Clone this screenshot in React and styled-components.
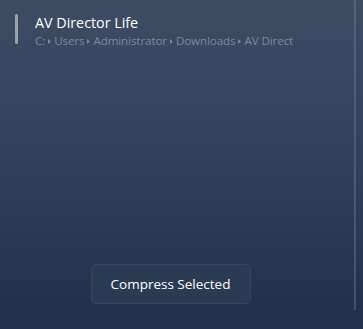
import React from "react";
import styled, { createGlobalStyle } from "styled-components";

const GlobalStyle = createGlobalStyle`
  html, body {
    margin: 0;
    padding: 0;
    background: #1f3049;
  }
  body {
    font-family: "Open Sans", "Noto Sans", sans-serif;
  }
`;

const Window = styled.div`
  display: flex;
  width: 363px;
  height: 329px;
  background: linear-gradient(180deg, #3e4d64 0%, #2f405a 50%, #1f3049 100%);
  overflow: hidden;
`;

const Main = styled.div`
  width: 341px;
  display: flex;
  flex-direction: column;
  align-items: stretch;
`;

const Gutter = styled.div`
  flex: 1;
  display: flex;
  padding: 0 0 19px 13px;
`;

const Track = styled.div`
  width: 2px;
  background: rgba(120, 140, 170, 0.35);
`;

const Item = styled.div`
  display: flex;
  align-items: flex-start;
  gap: 17px;
  padding: 14px 0 0 15px;
`;

const Marker = styled.div`
  width: 3px;
  height: 30px;
  border-radius: 2px;
  background: #9b9fa6;
`;

const Texts = styled.div`
  display: flex;
  flex-direction: column;
  width: 258px;
  overflow: hidden;
`;

const Title = styled.div`
  color: #ffffff;
  font-size: 14.3px;
  line-height: 17px;
`;

const Path = styled.div`
  display: flex;
  align-items: center;
  white-space: nowrap;
  color: #7c889b;
  font-size: 11.6px;
  line-height: 16px;
  margin-top: 2px;
  letter-spacing: -0.1px;
`;

const Sep = styled.svg`
  width: 3px;
  height: 5px;
  margin: 0 3px 0 3px;
  fill: #7c889b;
  flex: none;
`;

const Spacer = styled.div`
  flex: 1;
`;

const Button = styled.button`
  align-self: center;
  width: 160px;
  height: 40px;
  margin-bottom: 25px;
  border: 1px solid #35465f;
  border-radius: 5px;
  background: #2a3b54;
  color: #ffffff;
  font-family: "Open Sans", "Noto Sans", sans-serif;
  font-size: 13.5px;
  cursor: pointer;
`;

const segments = ["C:", "Users", "Administrator", "Downloads", "AV Director Life"];

const App = () => (
  <React.Fragment>
    <GlobalStyle />
    <Window>
      <Main>
        <Item>
          <Marker />
          <Texts>
            <Title>AV Director Life</Title>
            <Path>
              {segments.map((s, i) => (
                <React.Fragment key={i}>
                  {i > 0 && (
                    <Sep viewBox="0 0 3 5">
                      <path d="M0 0 L3 2.5 L0 5 Z" />
                    </Sep>
                  )}
                  <span>{s}</span>
                </React.Fragment>
              ))}
            </Path>
          </Texts>
        </Item>
        <Spacer />
        <Button>Compress Selected</Button>
      </Main>
      <Gutter>
        <Track />
      </Gutter>
    </Window>
  </React.Fragment>
);

export default App;
